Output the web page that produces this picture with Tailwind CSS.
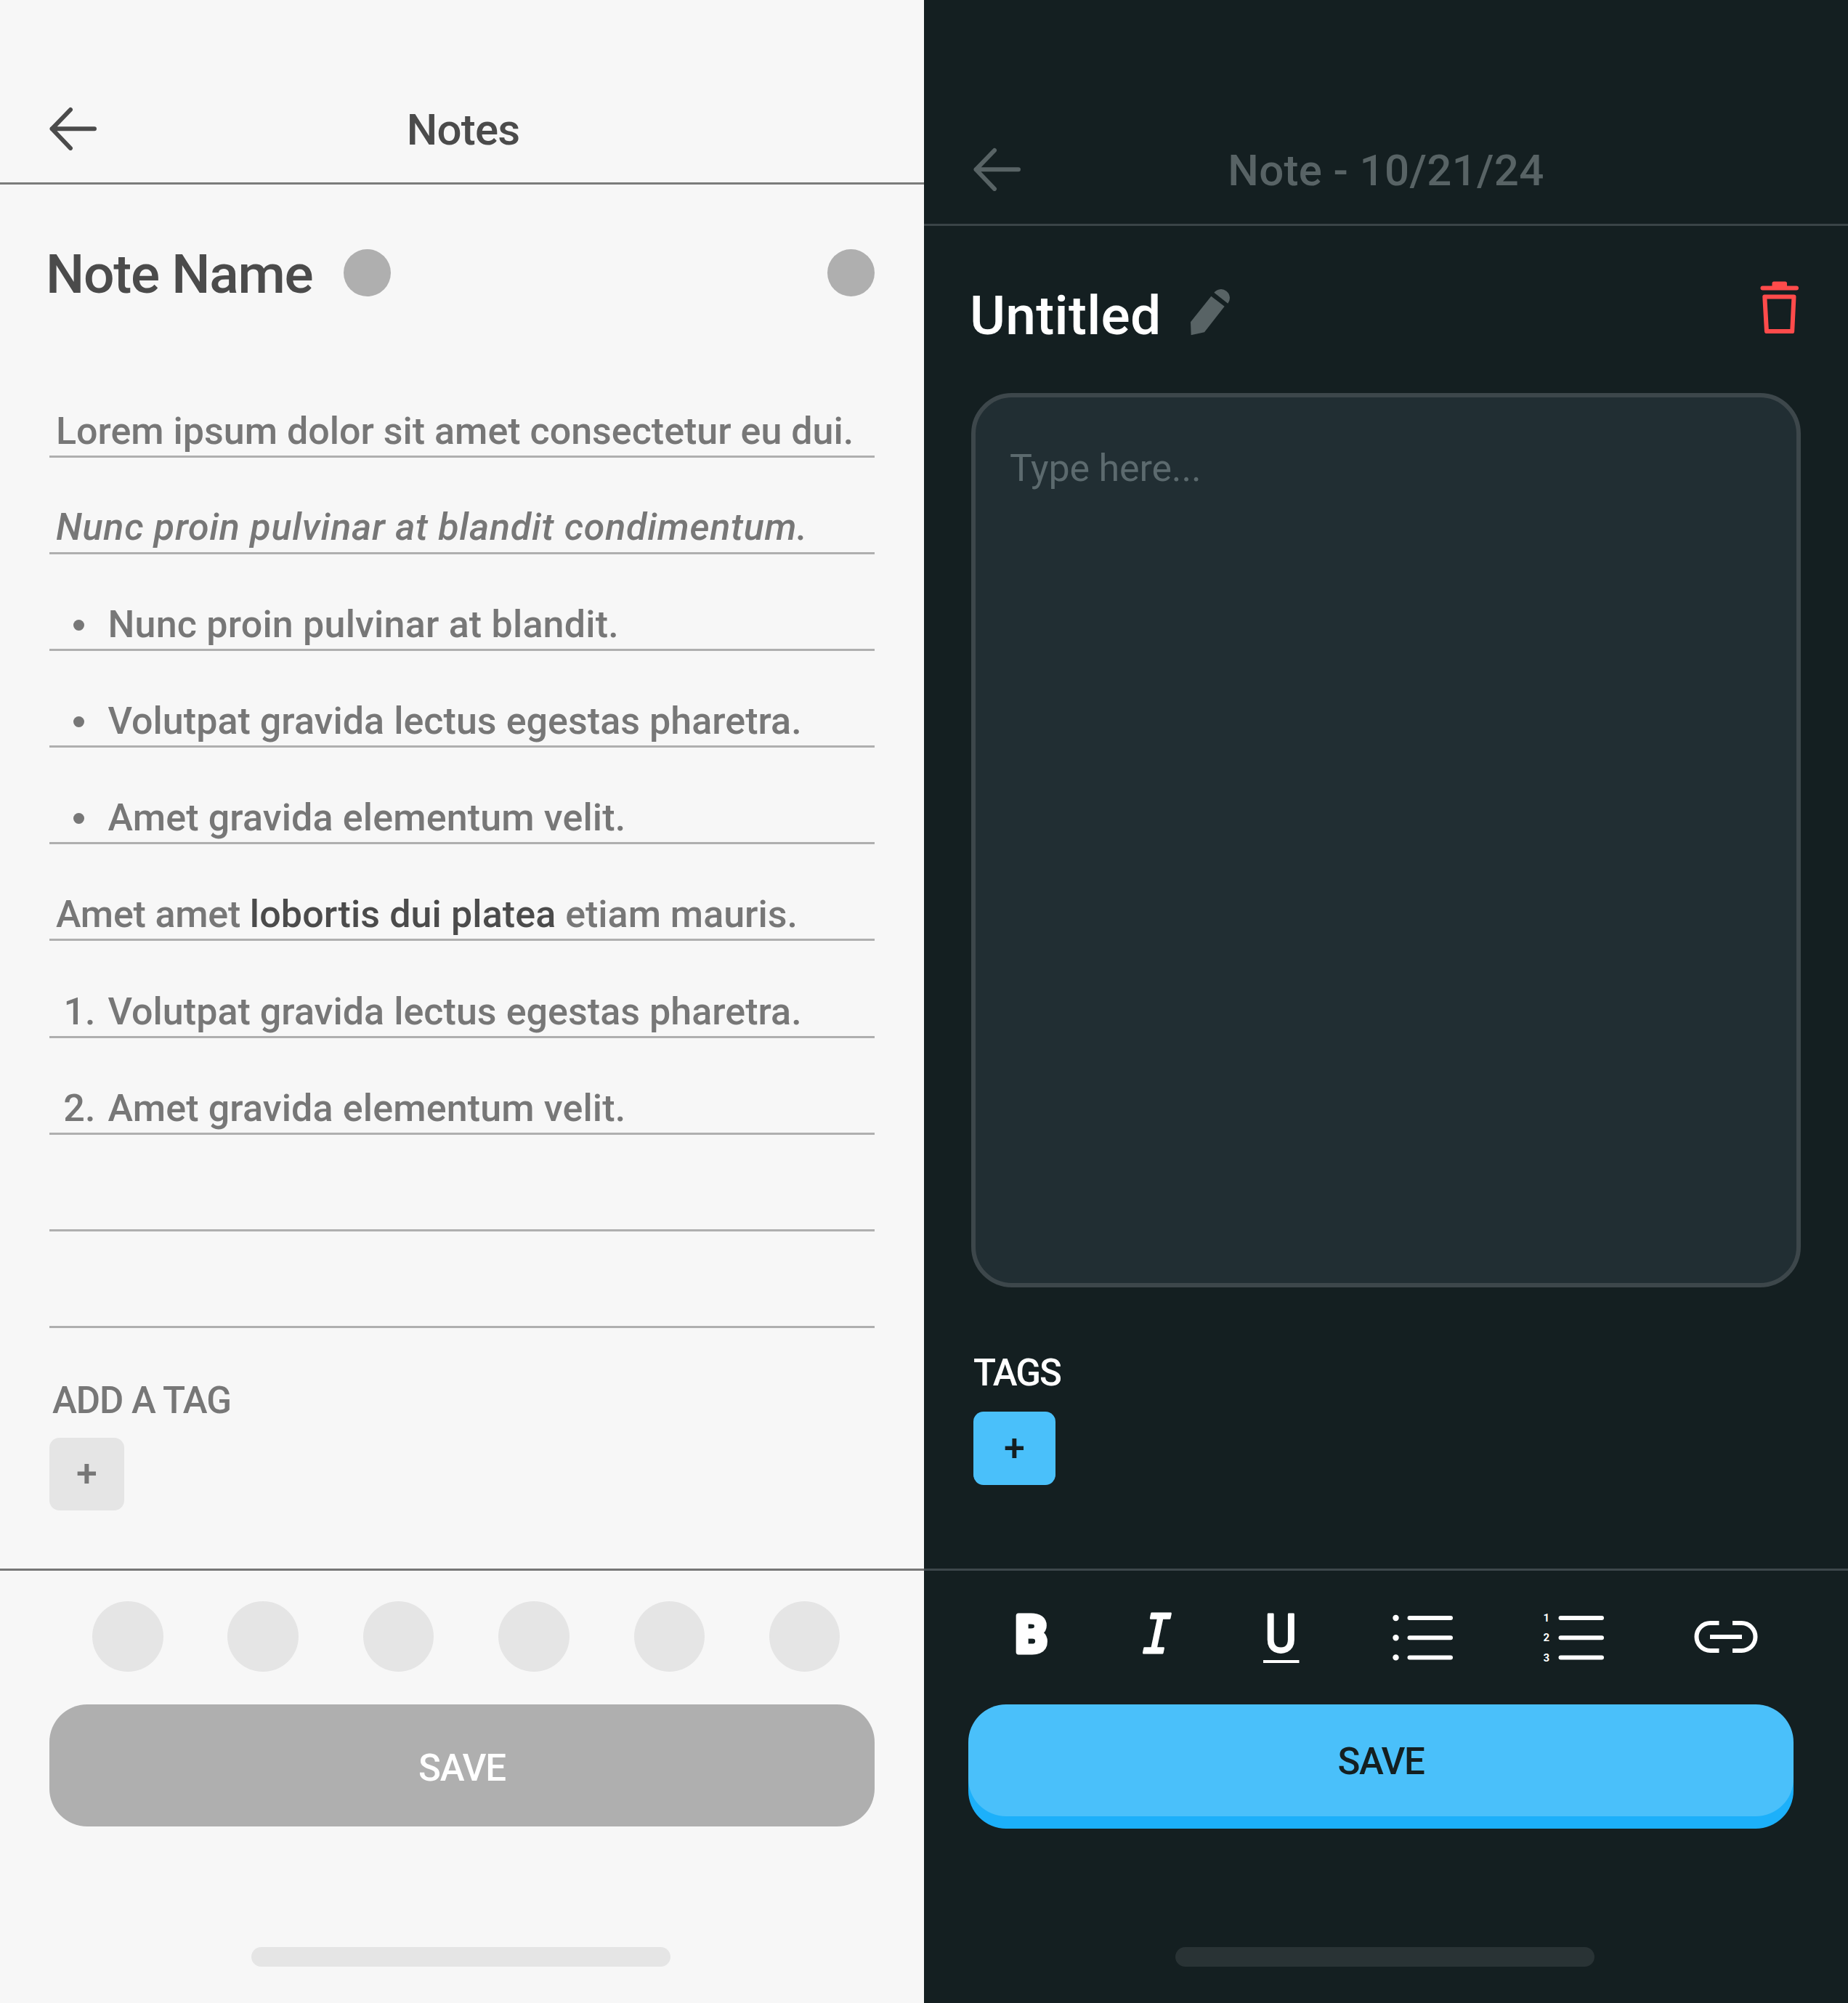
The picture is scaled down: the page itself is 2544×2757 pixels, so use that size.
<!DOCTYPE html>
<html lang="en">
<head>
<meta charset="utf-8">
<title>Notes</title>
<script src="https://cdn.jsdelivr.net/npm/@tailwindcss/browser@4"></script>
</head>
<body class="flex w-[2544px] h-[2757px] overflow-hidden font-['Roboto',sans-serif] font-medium">

<!-- Light screen -->
<section class="flex flex-col w-[1272px] h-[2757px] bg-[#f7f7f7] text-[#777777]">
  <header class="h-[254px] border-b-[3px] border-[#7b7c7b] px-[68px] pt-[147px] text-[#4b4b4b]">
    <div class="grid grid-cols-[1fr_auto_1fr] items-start">
      <svg class="w-[66px] h-[60px]" viewBox="0 0 66 60" fill="none" stroke="currentColor" stroke-width="6" stroke-linecap="round" stroke-linejoin="round"><path d="M62 30.3H3.5M29 4 3.5 30.3 29 57"/></svg>
      <h1 class="pl-[3px] pt-[2px] text-[60px] leading-[60px] tracking-[-0.8px] font-medium">Notes</h1>
    </div>
  </header>

  <main class="h-[1905px] px-[68px]">
    <div class="flex items-start h-[65px] mt-[89px] -ml-[5px]">
      <h2 class="mt-[2px] text-[75px] leading-[65px] tracking-[-1.24px] font-medium text-[#4b4b4b]">Note Name</h2>
      <span class="ml-[42px] size-[65px] rounded-full bg-[#afafaf]"></span>
      <span class="ml-auto size-[65px] rounded-full bg-[#afafaf]"></span>
    </div>

    <div class="mt-[88.9px] text-[52px] leading-[52px] whitespace-nowrap">
      <p class="flex items-end h-[133.1px] border-b-[3px] border-[#afafaf] pl-[9px] pb-[7px]">Lorem ipsum dolor sit amet consectetur eu dui.</p>
      <p class="flex items-end h-[133.1px] border-b-[3px] border-[#afafaf] pl-[9px] pb-[8px] italic tracking-[0.76px]">Nunc proin pulvinar at blandit condimentum.</p>
      <div class="flex items-end h-[133.1px] border-b-[3px] border-[#afafaf] pb-[7px] tracking-[0.2px]"><span class="w-[80.5px] pl-[32.5px] pb-[18px]"><i class="block size-[15px] rounded-full bg-[#777777]"></i></span>Nunc proin pulvinar at blandit.</div>
      <div class="flex items-end h-[133.1px] border-b-[3px] border-[#afafaf] pb-[7px] tracking-[0.05px]"><span class="w-[80.5px] pl-[32.5px] pb-[18px]"><i class="block size-[15px] rounded-full bg-[#777777]"></i></span>Volutpat gravida lectus egestas pharetra.</div>
      <div class="flex items-end h-[133.1px] border-b-[3px] border-[#afafaf] pb-[7px] tracking-[0.15px]"><span class="w-[80.5px] pl-[32.5px] pb-[18px]"><i class="block size-[15px] rounded-full bg-[#777777]"></i></span>Amet gravida elementum velit.</div>
      <div class="flex items-end h-[133.1px] border-b-[3px] border-[#afafaf] pl-[9px] pb-[7px]"><p><span class="tracking-[-0.2px]">Amet amet </span><b class="font-medium tracking-[0.1px] text-[#4b4b4b]">lobortis dui platea</b> etiam mauris.</p></div>
      <div class="flex items-end h-[133.1px] border-b-[3px] border-[#afafaf] pb-[7px] tracking-[0.05px]"><span class="w-[80.5px] pr-[17px] text-right">1.</span>Volutpat gravida lectus egestas pharetra.</div>
      <div class="flex items-end h-[133.1px] border-b-[3px] border-[#afafaf] pb-[7px] tracking-[0.15px]"><span class="w-[80.5px] pr-[17px] text-right">2.</span>Amet gravida elementum velit.</div>
      <div class="h-[133.1px] border-b-[3px] border-[#afafaf]"></div>
      <div class="h-[133.1px] border-b-[3px] border-[#afafaf]"></div>
    </div>

    <h3 class="mt-[70px] pl-[4px] text-[51px] leading-[60px] tracking-[-1.05px] font-medium">ADD A TAG</h3>
    <button class="mt-[21px] block w-[103px] h-[100px] rounded-[14px] bg-[#e5e5e5] text-center text-[52px] leading-[100px]">+</button>
  </main>

  <footer class="border-t-[3px] border-[#777777] px-[68px] pt-[41.5px]">
    <div class="flex gap-[88.9px] pl-[59px]">
      <span class="size-[97.5px] rounded-full bg-[#e5e5e5]"></span>
      <span class="size-[97.5px] rounded-full bg-[#e5e5e5]"></span>
      <span class="size-[97.5px] rounded-full bg-[#e5e5e5]"></span>
      <span class="size-[97.5px] rounded-full bg-[#e5e5e5]"></span>
      <span class="size-[97.5px] rounded-full bg-[#e5e5e5]"></span>
      <span class="size-[97.5px] rounded-full bg-[#e5e5e5]"></span>
    </div>
    <button class="mt-[45px] block w-full h-[168px] rounded-[52px] bg-[#afafaf] pt-[8px] text-center text-[51px] leading-[160px] tracking-[-1.1px] text-white">SAVE</button>
    <div class="ml-[278px] mt-[166px] w-[577px] h-[27px] rounded-full bg-[#e5e5e5]"></div>
  </footer>
</section>

<!-- Dark screen -->
<section class="flex flex-col w-[1272px] h-[2757px] bg-[#141f21] text-white">
  <header class="h-[311px] border-b-[3px] border-[#3a4447] px-[68px] pt-[203px] text-[#586365]">
    <div class="grid grid-cols-[1fr_auto_1fr] items-start">
      <svg class="w-[66px] h-[60px]" viewBox="0 0 66 60" fill="none" stroke="currentColor" stroke-width="6" stroke-linecap="round" stroke-linejoin="round"><path d="M62 30.3H3.5M29 4 3.5 30.3 29 57"/></svg>
      <h1 class="pt-[2px] text-[60px] leading-[60px] tracking-[0.34px] font-medium">Note - 10/21/24</h1>
    </div>
  </header>

  <main class="h-[1848px] px-[65px]">
    <div class="flex items-start h-[73px] mt-[76px]">
      <h2 class="-ml-[2px] mt-[11px] text-[75px] leading-[73px] tracking-[0.26px] font-medium">Untitled</h2>
      <svg class="ml-[40px] mt-[11px] w-[54px] h-[64px] text-[#586365]" viewBox="0 0 162 192" fill="currentColor"><path d="M85 29 140 71 57 178 2 190 0 136ZM97 14A36.3 36.3 0 0 1 154 59Z"/></svg>
      <svg class="ml-auto mr-[2px] w-[54px] h-[73px] text-[#ff4b4b]" viewBox="0 0 54 73" fill="none" stroke="currentColor" stroke-width="6" stroke-linecap="round" stroke-linejoin="round"><path d="M3.5 9.5H50"/><rect x="16.500" y=".5" width="20.500" height="10" rx="2.500" fill="currentColor" stroke="none"/><path d="M6.300 21.500H46.500L44.200 69H9Z" /></svg>
    </div>

    <div class="mt-[81px] w-[1142px] h-[1231px] rounded-[56px] border-[6px] border-[#3d474b] bg-[#212e33] pl-[47px] pt-[68px] text-[52px] leading-[60px] tracking-[-0.17px] font-normal text-[#5c6a6e]">Type here...</div>

    <h3 class="mt-[88px] pl-[3px] text-[51px] leading-[60px] tracking-[-2px] font-medium">TAGS</h3>
    <button class="ml-[3px] mt-[23px] block w-[113px] h-[101px] rounded-[14px] bg-[#4ac0fa] text-center text-[52px] leading-[101px] text-[#141f21]">+</button>
  </main>

  <footer class="border-t-[3px] border-[#3d474b] pt-[54px]">
    <div class="flex h-[74px] pl-[126px]">
      <svg class="w-[44px] h-[74px] overflow-visible" viewBox="0 0 44 74"><text class="font-bold text-[71px]" transform="translate(-.3 58.2) scale(.97 1)" fill="#fff" stroke="#fff" stroke-width="7" stroke-linejoin="round">B</text></svg>
      <svg class="ml-[129px] w-[41px] h-[74px] overflow-visible" viewBox="0 0 41 74"><text class="font-['Liberation_Mono',monospace] font-normal italic text-[82px]" transform="translate(0 58.6) skewX(-3) scale(.8 1)" fill="#fff" stroke="#fff" stroke-width="2.800" stroke-linejoin="round">I</text></svg>
      <svg class="ml-[127px] w-[50px] h-[74px] overflow-visible" viewBox="0 0 50 74"><text class="font-normal text-[72px]" transform="translate(2.600 57.500) scale(.93 1)" fill="#fff" stroke="#fff" stroke-width="2.800" stroke-linejoin="round">U</text><path d="M0 71H49.500" stroke="#fff" stroke-width="4"/></svg>
      <svg class="ml-[128px] w-[83px] h-[74px]" viewBox="0 0 83 74" fill="none" stroke="#fff" stroke-width="6" stroke-linecap="round"><path d="M23.500 11H80M23.500 38.200H80M23.500 65.400H80"/><path stroke-width="8.400" d="M4.500 11h.01M4.500 38.200h.01M4.500 65.400h.01"/></svg>
      <svg class="ml-[125px] w-[83px] h-[74px]" viewBox="0 0 83 74" fill="#fff"><path d="M23.500 11H80M23.500 38.200H80M23.500 65.400H80" stroke="#fff" stroke-width="6" stroke-linecap="round"/><g class="text-[15px] font-bold"><text x="-.5" y="16">1</text><text x="-.5" y="43.200">2</text><text x="-.5" y="70.500">3</text></g></svg>
      <svg class="ml-[124px] w-[88px] h-[74px]" viewBox="0 0 88 74" fill="none" stroke="#fff" stroke-width="6"><path d="M34.500 18H22.500A19 19 0 0 0 22.500 56H34.500M53 18H65.500A19 19 0 0 1 65.500 56H53M22 37H66"/></svg>
    </div>
    <button class="ml-[61px] mt-[56px] block w-[1136px] h-[154px] rounded-[52px] bg-[#4ac0fa] pt-[3px] text-center text-[51px] leading-[151px] tracking-[-1.4px] text-[#141f21] shadow-[0_17px_0_#1cb0fa]">SAVE</button>
    <div class="ml-[346px] mt-[180px] w-[577px] h-[27px] rounded-full bg-[#293335]"></div>
  </footer>
</section>

</body>
</html>
